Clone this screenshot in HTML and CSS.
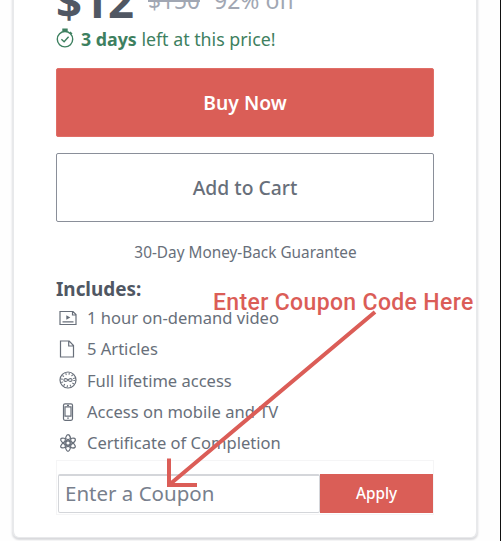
FILE: index.html
```
<!DOCTYPE html>
<html lang="en">
<head>
<meta charset="utf-8">
<title>Course purchase</title>
<link rel="stylesheet" href="styles.css">
</head>
<body>
<main class="card">
  <div class="price-row"><strong class="price">$12</strong><s class="old-price">$150</s><span class="discount">92% off</span></div>
  <div class="deadline">
    <svg class="timer" width="18" height="20" viewBox="0 0 18 20"><circle cx="9" cy="11.2" r="7.7"/><path d="M6.300 1.200h5.400M6.300 2.700h5.400M9 1v3M14 4l2 2M5.400 11.200l2.700 2.600 4.500-5"/></svg>
    <span><b>3 days</b> left at this price!</span>
  </div>
  <button class="button buy">Buy Now</button>
  <button class="button cart">Add to Cart</button>
  <p class="guarantee">30-Day Money-Back Guarantee</p>
  <h2 class="heading">Includes:</h2>
  <ul class="features">
    <li><svg class="icon" width="20" height="20" viewBox="0 0 20 20"><path d="M2 3.500h13l3 3v10H2zM14.500 3.500v3.500H18M4.500 13.800h11"/><path class="solid" d="M8.300 7.200v4.600l4-2.300z"/></svg><span>1 hour on-demand video</span></li>
    <li><svg class="icon" width="20" height="20" viewBox="0 0 20 20"><path d="M2.500 2h8.700l4.300 4.500V18h-13zM10.700 2v5h4.800"/></svg><span>5 Articles</span></li>
    <li><svg class="icon" width="20" height="20" viewBox="0 0 20 20"><circle cx="10" cy="10" r="8"/><circle class="ticks" cx="10" cy="10" r="6.200"/><path d="M10 10c-1.400-1.800-4-2-4 0s2.600 1.800 4 0 4-2 4 0-2.600 1.800-4 0"/></svg><span>Full lifetime access</span></li>
    <li><svg class="icon" width="20" height="20" viewBox="0 0 20 20"><rect x="5.500" y="1.800" width="9" height="16.500" rx="1.500"/><path d="M7 4.800h6v9.400H7zM9 3.300h2M9.200 16.200h1.600"/></svg><span>Access on mobile and TV</span></li>
    <li><svg class="icon" width="20" height="20" viewBox="0 0 20 20"><circle cx="10" cy="10" r="2.200"/><ellipse cx="10" cy="10" rx="3" ry="8.300"/><ellipse cx="10" cy="10" rx="3" ry="8.300" transform="rotate(60 10 10)"/><ellipse cx="10" cy="10" rx="3" ry="8.300" transform="rotate(120 10 10)"/></svg><span>Certificate of Completion</span></li>
  </ul>
  <form class="coupon">
    <div class="field">Enter a Coupon</div>
    <button class="apply" type="button">Apply</button>
  </form>
</main>
<div class="note">Enter Coupon Code Here</div>
<svg class="arrow" width="501" height="541" viewBox="0 0 501 541"><path d="M375 312L169 485M169 458.500V485H197"/></svg>
</body>
</html>
```
FILE: styles.css
```
* { box-sizing: border-box; }
body {
  margin: 0;
  height: 541px;
  padding: 0 23px 0 12px;
  overflow: hidden;
  position: relative;
  background: #fefefe;
  border-right: 1px solid #111;
  font-family: "Noto Sans", "Open Sans", sans-serif;
  color: #686f7a;
}
.card {
  height: 558px;
  margin-top: -20px;
  padding: 0 41px 0 42px;
  border: 1px solid #e8e9eb;
  border-width: 0 2px 1px;
  border-radius: 0 0 7px 7px;
  box-shadow: 0 2px 2px #d8d9dc;
  background: #fff;
}
body { padding-right: 22px; }
.price-row { display: flex; align-items: center; height: 40px; white-space: nowrap; }
.price { width: 92px; font-size: 45.500px; line-height: 40px; color: #505763; }
.old-price { width: 66px; font-size: 22.700px; color: #a1a7b3; }
.discount { font-size: 23px; color: #a1a7b3; }
.deadline { display: flex; align-items: center; height: 38px; color: #3e8060; font-size: 17.800px; white-space: nowrap; }
.timer { margin: -2px 7px 0 0; fill: none; stroke: #3e8060; stroke-width: 1.400; }
.button {
  display: block;
  width: 378px;
  height: 69px;
  margin: 10px 0 0;
  padding: 0;
  border-radius: 2px;
  font: 600 19.300px/66px "Noto Sans", sans-serif;
}
.buy { border: 1px solid #e06e67; background: #da5e57; color: #fff; }
.cart { margin-top: 16px; border: 1.500px solid #8a8f99; background: #fff; color: #686f7a; font-weight: 500; }
.guarantee { margin: 17px 0 0; height: 26px; font-size: 15.350px; line-height: 27px; text-align: center; white-space: nowrap; }
.heading { margin: 11px 0 0; height: 26px; font-size: 18.900px; line-height: 27px; color: #505763; }
.features { margin: 0; padding: 0; list-style: none; }
.features li { display: flex; align-items: center; height: 31.300px; font-size: 16.550px; white-space: nowrap; }
.icon { margin: 0 9px 0 2px; fill: none; stroke: #686f7a; stroke-width: 1.200; }
.solid { fill: #686f7a; stroke: none; }
.ticks { stroke-width: 2; stroke-dasharray: 1 2.240; }
.coupon {
  display: flex;
  width: 378px;
  height: 55px;
  margin-top: 2px;
  padding: 13px 0 1px 1px;
  border: 1px solid #f5f5f6;
}
.field { width: 262px; height: 39px; padding-left: 6px; border: 1px solid #d4d6da; border-top-width: 2px; border-radius: 2px; font-size: 20.500px; line-height: 34px; color: #78808d; white-space: nowrap; }
.apply { width: 113px; height: 39px; padding: 0; border: 0; background: #da5e57; color: #fff; font: 500 15.300px/37px "Noto Sans", sans-serif; }
.note { position: absolute; left: 213px; top: 289px; color: #db5d57; font: 500 23px/28px Roboto, sans-serif; letter-spacing: .35px; white-space: nowrap; }
.arrow { position: absolute; left: 0; top: 0; fill: none; stroke: #db5d57; stroke-width: 4; }
```
